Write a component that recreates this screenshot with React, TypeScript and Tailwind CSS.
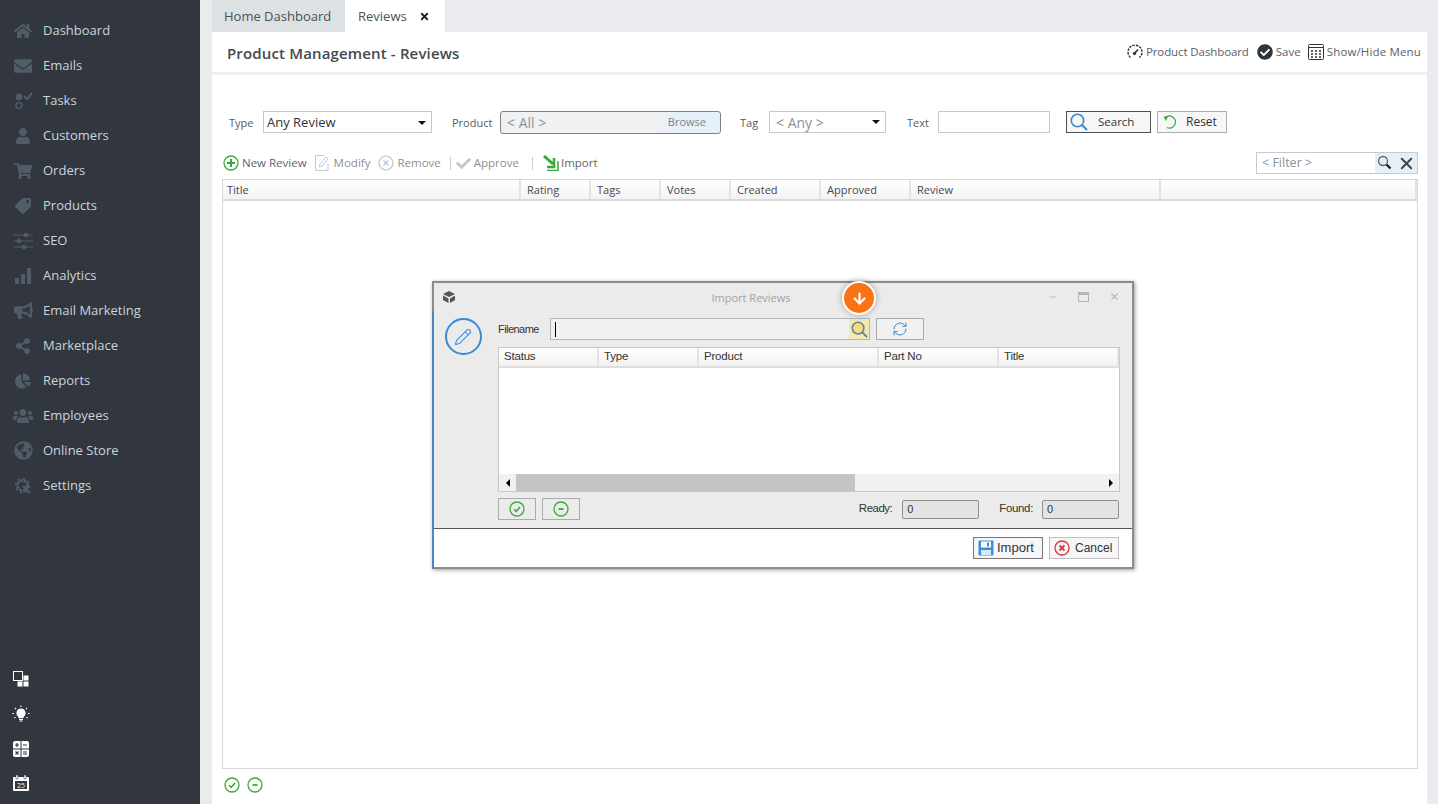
import { ReactNode } from "react";
import {
  FaHome,
  FaEnvelope,
  FaUser,
  FaShoppingCart,
  FaTag,
  FaBullhorn,
  FaShareAlt,
  FaChartPie,
  FaUsers,
  FaGlobeAmericas,
  FaCheck,
  FaCheckCircle,
} from "react-icons/fa";
import { X, ArrowDown, Pencil, RefreshCw, Minus } from "lucide-react";

const TasksIcon = () => (
  <svg viewBox="0 0 20 20" className="w-5 h-5" fill="none" stroke="currentColor">
    <circle cx="6" cy="6" r="3" fill="currentColor" />
    <circle cx="6" cy="14.5" r="3" strokeWidth="1.4" />
    <path d="M11 8l3 3 5-6" transform="translate(0 -3)" strokeWidth="2" />
  </svg>
);

const SlidersIcon = () => (
  <svg viewBox="0 0 20 20" className="w-5 h-5" fill="currentColor" stroke="currentColor">
    <path d="M0 4h20M0 10h20M0 16h20" strokeWidth="1" />
    <circle cx="13" cy="4" r="1.8" />
    <circle cx="6" cy="10" r="1.8" />
    <circle cx="11" cy="16" r="1.8" />
  </svg>
);

const BarsIcon = () => (
  <svg viewBox="0 0 18 18" className="w-[18px] h-[18px]" fill="currentColor">
    <rect x="1" y="11" width="4" height="6" rx="0.5" />
    <rect x="7" y="7" width="4" height="10" rx="0.5" />
    <rect x="13" y="1" width="4" height="16" rx="0.5" />
  </svg>
);

const GearIcon = () => (
  <svg viewBox="0 0 18 18" className="w-[18px] h-[18px]" fill="none" stroke="currentColor">
    <circle cx="8.5" cy="8.5" r="5" strokeWidth="3" strokeDasharray="3 1" />
    <circle cx="8.5" cy="8.5" r="7" strokeWidth="1.6" strokeDasharray="2.5 3" />
    <path d="M9 9l7 7" strokeWidth="2.4" />
  </svg>
);

const navItems: [string, ReactNode][] = [
  ["Dashboard", <FaHome className="w-[18px] h-[18px]" />],
  ["Emails", <FaEnvelope className="w-[18px] h-[18px]" />],
  ["Tasks", <TasksIcon />],
  ["Customers", <FaUser className="w-4 h-4" />],
  ["Orders", <FaShoppingCart className="w-[18px] h-[18px]" />],
  ["Products", <FaTag className="w-4 h-4 rotate-90" />],
  ["SEO", <SlidersIcon />],
  ["Analytics", <BarsIcon />],
  ["Email Marketing", <FaBullhorn className="w-[19px] h-[19px]" />],
  ["Marketplace", <FaShareAlt className="w-4 h-4" />],
  ["Reports", <FaChartPie className="w-4 h-4" />],
  ["Employees", <FaUsers className="w-5 h-5" />],
  ["Online Store", <FaGlobeAmericas className="w-[19px] h-[19px]" />],
  ["Settings", <GearIcon />],
];

const Sidebar = () => (
  <aside className="w-[200px] shrink-0 h-full bg-[#31363f] flex flex-col justify-between pt-[13px] pb-[13px]">
    <nav>
      {navItems.map(([label, icon]) => (
        <div key={label} className="h-[35px] flex items-center">
          <div className="w-[43px] pl-[12px] pr-[9px] flex justify-center text-[#505d69]">{icon}</div>
          <span className="text-[13px] text-[#ccd4db] leading-none">{label}</span>
        </div>
      ))}
    </nav>
    <div className="flex flex-col gap-[18px] pl-[13px] text-white">
      <svg viewBox="0 0 16 16" className="w-4 h-4" fill="currentColor">
        <rect x="0.5" y="0.5" width="9" height="9" fill="none" stroke="currentColor" />
        <rect x="10.5" y="4.5" width="5" height="5" />
        <rect x="4.5" y="10.5" width="5" height="5" />
        <rect x="10.5" y="10.5" width="5" height="5" />
      </svg>
      <svg viewBox="0 0 18 18" className="w-[18px] h-[18px] -ml-px" fill="none" stroke="white">
        <path d="M9 3.500a4.500 4.500 0 0 1 2.600 8.200V13H6.400v-1.300A4.500 4.500 0 0 1 9 3.500z" fill="white" stroke="none" />
        <path d="M7 14.300h4M7.500 16h3" strokeWidth="1.200" />
        <path d="M9 0.500v1.500M3 3l1 1M15 3l-1 1M0.500 8.500H2M16 8.500h1.500M2.500 13l1-.8M15.500 13l-1-.8" strokeWidth="1.100" />
      </svg>
      <svg viewBox="0 0 16 16" className="w-4 h-4">
        <rect width="16" height="16" rx="2" fill="white" />
        <path d="M0 8h16M8 0v16" stroke="#31363f" />
        <path d="M2 4h4M4 2v4M10 4h4M2.500 10.500l3 3M5.500 10.500l-3 3M10 11h4M10 13h4" stroke="#31363f" strokeWidth="1.200" />
      </svg>
      <svg viewBox="0 0 16 16" className="w-4 h-4">
        <path d="M1 2h14a1 1 0 0 1 1 1v12a1 1 0 0 1-1 1H1a1 1 0 0 1-1-1V3a1 1 0 0 1 1-1z" fill="white" />
        <rect x="3" y="0" width="2" height="4" fill="white" stroke="#31363f" strokeWidth="0.5" />
        <rect x="11" y="0" width="2" height="4" fill="white" stroke="#31363f" strokeWidth="0.5" />
        <rect x="2" y="6" width="12" height="8" fill="#31363f" />
        <text x="8" y="13" textAnchor="middle" fontSize="7" fill="white" fontFamily="Open Sans">25</text>
      </svg>
    </div>
  </aside>
);

const Tabs = () => (
  <div className="h-[32px] flex text-[13px] text-[#4a5157]">
    <div className="w-[133px] bg-[#dde1e3] flex items-center pl-[12px] pt-px">Home Dashboard</div>
    <div className="w-[100px] bg-white flex items-center pl-[13px] pt-px gap-[12px]">
      Reviews
      <X className="w-[11px] h-[11px] text-[#222]" strokeWidth={4} />
    </div>
  </div>
);

const CircleCheck = ({ className }: { className: string }) => (
  <svg viewBox="0 0 16 16" className={className} fill="none" stroke="#3ca83c">
    <circle cx="8" cy="8" r="7" strokeWidth="1.300" />
    <path d="M5 8.200l2.200 2.200L11 6" strokeWidth="1.600" />
  </svg>
);

const CircleMinus = ({ className }: { className: string }) => (
  <svg viewBox="0 0 16 16" className={className} fill="none" stroke="#3ca83c">
    <circle cx="8" cy="8" r="7" strokeWidth="1.300" />
    <path d="M5.500 8h5" strokeWidth="1.800" />
  </svg>
);

const Header = () => (
  <div className="h-[43px] shrink-0 border-b-[3px] border-[#f0f1f2] flex items-center justify-between pl-[15px] pr-[6px]">
    <h1 className="text-[15px] font-semibold text-[#44494e] tracking-[0.15px] pt-[2px]">Product Management - Reviews</h1>
    <div className="flex items-center text-[11.500px] text-[#5b6167]">
      <svg viewBox="0 0 16 16" className="w-4 h-4 mr-[3px]" fill="none" stroke="#333">
        <path d="M3.500 13.500a7 7 0 1 1 9 0" strokeWidth="1.400" strokeDasharray="2.500 1" />
        <path d="M7.500 9.500L11 5.500" strokeWidth="1.600" />
        <circle cx="7.500" cy="9.500" r="1.200" fill="#333" />
      </svg>
      <span className="tracking-[-0.1px]">Product Dashboard</span>
      <FaCheckCircle className="w-4 h-4 ml-[8px] mr-[3px] text-[#2f343b]" />
      <span>Save</span>
      <svg viewBox="0 0 16 16" className="w-4 h-4 ml-[7px] mr-[3px]" fill="none" stroke="#333">
        <rect x="0.500" y="0.500" width="15" height="15" rx="1" />
        <path d="M0.500 3.500h15" />
        <path d="M3 7h2M7 7h2M11 7h2M3 10h2M7 10h2M11 10h2M3 13h2M7 13h2M11 13h2" strokeWidth="1.500" />
      </svg>
      <span className="tracking-[0.15px]">Show/Hide Menu</span>
    </div>
  </div>
);

const Caret = () => (
  <span className="w-0 h-0 border-x-[4px] border-x-transparent border-t-[4px] border-t-[#111]" />
);

const Magnifier = ({ className, fill = "none" }: { className: string; fill?: string }) => (
  <svg viewBox="0 0 18 18" className={className} fill={fill} stroke="currentColor">
    <circle cx="7.500" cy="7.500" r="6.200" strokeWidth="1.600" />
    <path d="M12 12l5 5" strokeWidth="2" />
  </svg>
);

const FilterRow = () => (
  <div className="h-[24px] mt-[35px] flex items-center text-[11px] text-[#555b60] shrink-0">
    <span className="ml-[17px] w-[34px] pt-[2px]">Type</span>
    <div className="w-[169px] h-[22px] border border-[#c6c9cb] flex items-center justify-between pl-[3px] pr-[5px] pt-px text-[13px] text-[#333]">
      Any Review
      <Caret />
    </div>
    <span className="ml-[20px] w-[48px] pt-[2px]">Product</span>
    <div className="w-[221px] h-[23px] border-[1.5px] border-[#7c8186] rounded-[3px] flex items-center justify-between bg-gradient-to-r from-[#eff1f2] from-70% to-[#e6f0f9] to-80% pl-[6px] pr-[14px] pt-px">
      <span className="text-[14px] text-[#8c9196]">&lt; All &gt;</span>
      <span className="text-[#7c8388]">Browse</span>
    </div>
    <span className="ml-[19px] w-[29px] pt-[2px]">Tag</span>
    <div className="w-[117px] h-[22px] border border-[#c6c9cb] flex items-center justify-between pl-[6px] pr-[5px] text-[14px] text-[#8c9196]">
      &lt; Any &gt;
      <Caret />
    </div>
    <span className="ml-[21px] w-[31px] pt-[2px]">Text</span>
    <div className="w-[112px] h-[22px] border border-[#c6c9cb]" />
    <div className="ml-[16px] w-[85px] h-[22px] border border-[#4c5157] bg-[#f7f7f7] flex items-center pl-[3px] text-[11.500px] text-[#333]">
      <Magnifier className="w-[18px] h-[18px] text-[#3f88c5]" />
      <span className="ml-[10px]">Search</span>
    </div>
    <div className="ml-[6px] w-[70px] h-[22px] border border-[#a9adb0] bg-[#f7f7f7] flex items-center pl-[4px] text-[12px] text-[#333]">
      <svg viewBox="0 0 16 16" className="w-4 h-4" fill="none" stroke="#3ca83c" strokeWidth="1.300">
        <path d="M3.500 3.500A6 6 0 1 1 5 13.500" />
        <path d="M1.500 2.500l4.500 0-2 4.500z" fill="#3ca83c" stroke="none" />
      </svg>
      <span className="ml-[8px]">Reset</span>
    </div>
  </div>
);

const Toolbar = () => (
  <div className="h-[22px] mt-[18px] flex items-center text-[11.500px] text-[#8b9094] pl-[11px] pr-[9px] shrink-0">
    <svg viewBox="0 0 16 16" className="w-4 h-4 mr-[3px]" fill="none" stroke="#3ca83c">
      <circle cx="8" cy="8" r="7" strokeWidth="1.300" />
      <path d="M8 4v8M4 8h8" strokeWidth="2" />
    </svg>
    <span className="text-[#5f6569]">New Review</span>
    <svg viewBox="0 0 16 16" className="w-4 h-4 ml-[8px] mr-[3px]" fill="none" stroke="#c9cbcd">
      <path d="M13 9v6.500H0.500V0.500h9" />
      <path d="M4 12l1-3 6-7 2 2-6 7z" />
    </svg>
    <span>Modify</span>
    <svg viewBox="0 0 16 16" className="w-4 h-4 ml-[8px] mr-[3px]" fill="none" stroke="#bfc2c5">
      <circle cx="8" cy="8" r="7" strokeWidth="1.200" />
      <path d="M5.500 5.500l5 5M10.500 5.500l-5 5" strokeWidth="1.200" />
    </svg>
    <span>Remove</span>
    <span className="w-px h-[13px] bg-[#c9cbcd] ml-[9px]" />
    <FaCheck className="w-[15px] h-[15px] ml-[5px] mr-[3px] text-[#c4c7c9]" />
    <span>Approve</span>
    <span className="w-px h-[13px] bg-[#c9cbcd] ml-[13px]" />
    <svg viewBox="0 0 16 16" className="w-4 h-4 ml-[10px] mr-[2px]" fill="none" stroke="#3aa83a">
      <path d="M1 1l9 8" strokeWidth="3" />
      <path d="M11 3v9H4" strokeWidth="2.500" />
      <path d="M4 15.500h11V6" strokeWidth="1.500" />
    </svg>
    <span className="text-[#5f6569]">Import</span>
    <div className="ml-auto w-[162px] h-[22px] border border-[#c3cad3] flex items-center justify-between pl-[5px] text-[12.500px] text-[#8c9196]">
      <span className="pt-px">&lt; Filter &gt;</span>
      <div className="w-[42px] h-full bg-[#e6eef8] flex items-center justify-center gap-[4px]">
        <svg viewBox="0 0 16 16" className="w-4 h-4" fill="none" stroke="#5c6670">
          <circle cx="6" cy="6" r="4.500" strokeWidth="1.300" />
          <path d="M9.500 9.500l4 4" stroke="#222" strokeWidth="2.400" />
        </svg>
        <X className="w-[19px] h-[19px] text-[#444]" strokeWidth={2.500} />
      </div>
    </div>
  </div>
);

const columns: [string, string][] = [
  ["Title", "w-[298px] pl-[4px]"],
  ["Rating", "w-[70px] pl-[6px]"],
  ["Tags", "w-[70px] pl-[6px]"],
  ["Votes", "w-[70px] pl-[6px]"],
  ["Created", "w-[90px] pl-[6px]"],
  ["Approved", "w-[90px] pl-[6px]"],
  ["Review", "w-[250px] pl-[6px]"],
  ["", "flex-1"],
];

const ReviewsTable = () => (
  <div className="mt-[5px] ml-[10px] mr-[9px] flex-1 border border-[#d5d7d9] flex flex-col min-h-0">
    <div className="h-[21px] flex border-b-[2px] border-[#d9dbdd] bg-gradient-to-b from-white to-[#f3f3f3] text-[11px] text-[#44494e]">
      {columns.map(([label, width], i) => (
        <div key={i} className={`${width} flex items-center pt-px border-r-[2px] border-[#e2e3e4]`}>
          {label}
        </div>
      ))}
    </div>
  </div>
);

const dialogColumns: [string, string][] = [
  ["Status", "w-[100px]"],
  ["Type", "w-[100px]"],
  ["Product", "w-[180px]"],
  ["Part No", "w-[120px]"],
  ["Title", "flex-1"],
];

const ImportDialog = () => (
  <div className="absolute left-[432px] top-[281px] w-[702px] h-[288px] border-2 border-[#8a8d90] shadow-[1px_1px_4px_rgba(0,0,0,0.4)] bg-[#ebebeb] flex flex-col text-[11px] text-[#333] font-['Liberation_Sans',sans-serif]">
    <div className="absolute -left-[2px] top-[28px] -bottom-[2px] w-[2px] bg-[#4f86bd]" />
    <div className="h-[28px] shrink-0 relative flex items-center justify-center text-[#a3a3a3] font-['Open_Sans',sans-serif]">
      <svg viewBox="0 0 14 14" className="absolute left-[8px] top-[7px] w-[14px] h-[14px]" fill="#555">
        <path d="M1 4l6-3 6 3-6 3zM1 5.500l5.500 3V13L1 10zM8 8.500l5-3V10l-5 3z" />
      </svg>
      <span className="mr-[64px] pt-[2px]">Import Reviews</span>
      <div className="absolute right-[12px] top-[8px] flex items-center gap-[20px] text-[#b5b5b5]">
        <Minus className="w-[10px] h-[10px] -ml-[2px]" strokeWidth={2} />
        <span className="w-[11px] h-[10px] border border-[#b5b5b5] border-t-[3px]" />
        <X className="w-[11px] h-[11px]" strokeWidth={2.500} />
      </div>
    </div>
    <div className="flex-1 flex min-h-0">
      <div className="w-[64px] shrink-0 flex justify-center pt-[7px] pr-[6px]">
        <div className="w-[37px] h-[37px] rounded-full border-2 border-[#3b8ad9] flex items-center justify-center">
          <Pencil className="w-[18px] h-[18px] text-[#3b8ad9]" strokeWidth={1.400} />
        </div>
      </div>
      <div className="flex-1 flex flex-col pr-[13px]">
        <div className="flex items-center h-[22px] mt-[7px]">
          <span className="w-[52px] text-[11px] tracking-[-0.55px]">Filename</span>
          <div className="w-[320px] h-[22px] border border-[#b3b5b7] bg-[#f1f1f1] flex items-center justify-between pl-[4px]">
            <span className="w-px h-[15px] bg-black" />
            <div className="w-[20px] h-full bg-[#f6e7b5] flex items-center justify-center">
              <Magnifier className="w-[17px] h-[17px] text-[#4d87a5]" fill="#fbd97a" />
            </div>
          </div>
          <div className="ml-[6px] w-[48px] h-[22px] border border-[#a9abad] bg-[#f1f1f1] flex items-center justify-center">
            <RefreshCw className="w-4 h-4 text-[#3f8ac9]" strokeWidth={1.500} />
          </div>
        </div>
        <div className="mt-[7px] -mr-px h-[145px] bg-white border border-[#c8c8c8] flex flex-col">
          <div className="h-[20px] flex shrink-0 border-b-[2px] border-[#dedede] bg-gradient-to-b from-white to-[#f1f1f1] text-[11.500px] tracking-[-0.2px]">
            {dialogColumns.map(([label, width]) => (
              <div key={label} className={`${width} flex items-center pl-[5px] border-r-[2px] border-[#e4e4e4]`}>
                {label}
              </div>
            ))}
          </div>
          <div className="flex-1" />
          <div className="h-[17px] flex items-center bg-[#f1f1f1] shrink-0">
            <div className="w-[17px] h-full flex items-center justify-center">
              <span className="w-0 h-0 border-y-[4px] border-y-transparent border-r-[4px] border-r-black" />
            </div>
            <div className="w-[339px] h-full bg-[#c4c4c4]" />
            <div className="flex-1" />
            <div className="w-[17px] h-full flex items-center justify-center">
              <span className="w-0 h-0 border-y-[4px] border-y-transparent border-l-[4px] border-l-black" />
            </div>
          </div>
        </div>
        <div className="flex items-center mt-[6px] h-[22px]">
          <div className="w-[38px] h-[22px] border border-[#a9abad] flex items-center justify-center">
            <CircleCheck className="w-4 h-4" />
          </div>
          <div className="ml-[6px] w-[38px] h-[22px] border border-[#a9abad] flex items-center justify-center">
            <CircleMinus className="w-4 h-4" />
          </div>
          <span className="ml-auto text-[11.500px] tracking-[-0.5px]">Ready:</span>
          <div className="ml-[10px] w-[77px] h-[19px] border border-[#8e8e8e] rounded-[2px] bg-[#e3e3e3] flex items-center pl-[4px]">0</div>
          <span className="ml-[20px] text-[11.500px] tracking-[-0.35px]">Found:</span>
          <div className="ml-[9px] w-[77px] h-[19px] border border-[#8e8e8e] rounded-[2px] bg-[#e3e3e3] flex items-center pl-[4px]">0</div>
        </div>
      </div>
    </div>
    <div className="h-[39px] shrink-0 bg-white border-t border-[#555] flex items-center justify-end gap-[6px] pr-[13px] pb-px text-[12px]">
      <div className="w-[70px] h-[22px] border border-[#777] bg-[#f6f6f6] flex items-center pl-[4px] gap-[3px] text-[13px]">
        <svg viewBox="0 0 16 16" className="w-4 h-4">
          <rect x="0.500" y="0.500" width="15" height="15" rx="1" fill="#3a8fdc" />
          <rect x="3" y="1.500" width="10" height="6" fill="white" />
          <rect x="9" y="2.500" width="2" height="4" fill="#3a8fdc" />
          <rect x="3" y="10" width="10" height="5" fill="#d5e8f8" />
        </svg>
        Import
      </div>
      <div className="w-[70px] h-[22px] border border-[#c0c0c0] bg-[#f6f6f6] flex items-center pl-[4px] gap-[5px]">
        <svg viewBox="0 0 16 16" className="w-4 h-4" fill="none" stroke="#d9363e">
          <circle cx="8" cy="8" r="7" strokeWidth="1.300" />
          <path d="M5.500 5.500l5 5M10.500 5.500l-5 5" strokeWidth="1.800" />
        </svg>
        Cancel
      </div>
    </div>
    <div className="absolute left-[408px] -top-[2px] w-[34px] h-[34px] rounded-full bg-[#f97316] border-2 border-white shadow-[0_0_6px_rgba(0,0,0,0.3)] flex items-center justify-center">
      <ArrowDown className="w-[17px] h-[17px] text-white" strokeWidth={3} />
    </div>
  </div>
);

export default function App() {
  return (
    <div className="relative w-[1438px] h-[804px] overflow-hidden flex bg-[#e9ebee] font-['Open_Sans',sans-serif]">
      <Sidebar />
      <main className="ml-[12px] w-[1215px] h-full flex flex-col">
        <Tabs />
        <div className="flex-1 bg-white flex flex-col min-h-0">
          <Header />
          <FilterRow />
          <Toolbar />
          <ReviewsTable />
          <div className="h-[35px] shrink-0 flex items-center gap-[7px] pl-[12px] pb-[4px]">
            <CircleCheck className="w-4 h-4" />
            <CircleMinus className="w-4 h-4" />
          </div>
        </div>
      </main>
      <ImportDialog />
    </div>
  );
}
